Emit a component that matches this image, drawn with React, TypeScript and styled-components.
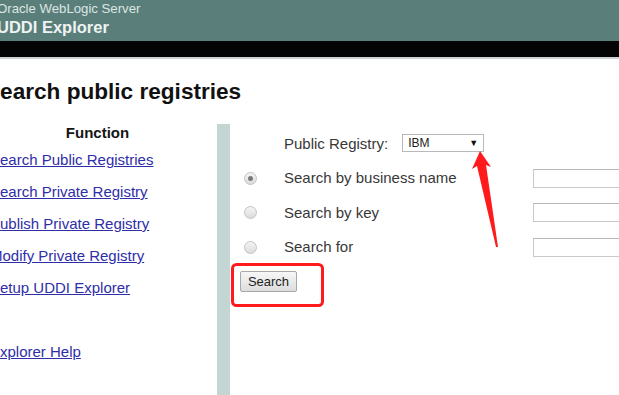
import styled, { createGlobalStyle } from 'styled-components';

const GlobalStyle = createGlobalStyle`
  html, body {
    margin: 0;
    padding: 0;
    background: #ffffff;
    overflow: hidden;
  }
  body {
    font-family: "Liberation Sans", Arial, sans-serif;
  }
`;

const Page = styled.div`
  position: relative;
  width: 619px;
  height: 395px;
  overflow: hidden;
`;

const Header = styled.header`
  background-color: #5a7f7a;
  height: 41px;
  padding: 1px 0 0 0;
  box-sizing: border-box;
`;

const HeaderLine = styled.div<{ strong?: boolean }>`
  margin-left: -3px;
  color: ${({ strong }) => (strong ? '#eef3f2' : '#dce5e3')};
  font-size: ${({ strong }) => (strong ? '16.5px' : '13.2px')};
  line-height: ${({ strong }) => (strong ? '20px' : '16px')};
  font-weight: ${({ strong }) => (strong ? 700 : 400)};
  white-space: nowrap;
`;

const BlackBand = styled.div`
  height: 16px;
  background-color: #050405;
  border-bottom: 2px solid #cfd3d3;
`;

const Title = styled.h1`
  margin: 21px 0 0 -15px;
  font-size: 22.6px;
  line-height: 24px;
  font-weight: 700;
  color: #111111;
  white-space: nowrap;
`;

const Content = styled.div`
  display: flex;
  margin-top: 20px;
  min-height: 300px;
`;

const Sidebar = styled.nav`
  width: 215px;
  margin-left: -10px;
  flex-shrink: 0;
`;

const SidebarTitle = styled.div`
  text-align: center;
  font-size: 15px;
  font-weight: 700;
  line-height: 18px;
  height: 18px;
  margin-bottom: 2px;
  color: #151515;
`;

const NavItem = styled.a`
  display: block;
  height: 32px;
  line-height: 32px;
  font-size: 15px;
  color: #2e2ea8;
  text-decoration: underline;
  white-space: nowrap;
`;

const NavGap = styled.div`
  height: 32px;
`;

const Divider = styled.div`
  width: 13px;
  margin: 0 0 0 12px;
  background-color: #c4d6d3;
  flex-shrink: 0;
`;

const Main = styled.section`
  padding-top: 2px;
  flex: 1;
`;

const FormGrid = styled.div`
  display: grid;
  grid-template-columns: 54px 249px 150px;
  grid-auto-rows: 34.5px;
  align-items: center;
`;

const RadioCell = styled.div`
  padding-left: 14px;
  display: flex;
  align-items: center;
`;

const Radio = styled.span<{ checked?: boolean }>`
  width: 13px;
  height: 13px;
  box-sizing: border-box;
  border-radius: 50%;
  border: 1px solid #c2c2c2;
  background: linear-gradient(#f4f4f4, #dcdcdc);
  display: flex;
  align-items: center;
  justify-content: center;
  margin-top: 1px;

  &::after {
    content: '';
    width: 5px;
    height: 5px;
    border-radius: 50%;
    background: ${({ checked }) => (checked ? '#7a7a7a' : 'transparent')};
  }
`;

const Label = styled.span`
  font-size: 15px;
  color: #383838;
  white-space: nowrap;
`;

const RegistryCell = styled.div`
  grid-column: 2 / 4;
  display: flex;
  align-items: center;
  gap: 14px;
`;

const Select = styled.div`
  width: 82px;
  height: 18px;
  box-sizing: border-box;
  border: 1px solid #b9b9b9;
  display: flex;
  align-items: center;
  justify-content: space-between;
  padding: 0 5px 0 5px;
  font-size: 12px;
  color: #222222;
  background: #ffffff;
`;

const Caret = styled.span`
  font-size: 9px;
  color: #111111;
`;

const TextInput = styled.div`
  width: 150px;
  height: 19px;
  box-sizing: border-box;
  border: 1px solid #c9c9c9;
  border-top-color: #b8b8b8;
  background: #ffffff;
  margin-top: 1px;
`;

const Button = styled.button`
  margin: 7px 0 0 10px;
  width: 57px;
  height: 21px;
  padding: 0;
  border: 1px solid #a8a8a8;
  border-radius: 2px;
  background: linear-gradient(#f7f7f7, #dddddd);
  font-family: "Liberation Sans", Arial, sans-serif;
  font-size: 13px;
  color: #222222;
`;

const Overlay = styled.svg`
  position: absolute;
  left: 0;
  top: 0;
  pointer-events: none;
`;

const links = [
  'Search Public Registries',
  'Search Private Registry',
  'Publish Private Registry',
  'Modify Private Registry',
  'Setup UDDI Explorer',
];

const options = [
  { label: 'Search by business name', checked: true },
  { label: 'Search by key', checked: false },
  { label: 'Search for', checked: false },
];

export default function App() {
  return (
    <>
      <GlobalStyle />
      <Page>
        <Header>
          <HeaderLine>Oracle WebLogic Server</HeaderLine>
          <HeaderLine strong>UDDI Explorer</HeaderLine>
        </Header>
        <BlackBand />
        <Title>Search public registries</Title>
        <Content>
          <Sidebar>
            <SidebarTitle>Function</SidebarTitle>
            {links.map((l) => (
              <NavItem key={l} href="#">{l}</NavItem>
            ))}
            <NavGap />
            <NavItem href="#">Explorer Help</NavItem>
          </Sidebar>
          <Divider />
          <Main>
            <FormGrid>
              <div />
              <RegistryCell>
                <Label>Public Registry:</Label>
                <Select>
                  IBM
                  <Caret>▼</Caret>
                </Select>
              </RegistryCell>
              {options.map((o) => (
                <>
                  <RadioCell key={o.label + 'r'}>
                    <Radio checked={o.checked} />
                  </RadioCell>
                  <Label key={o.label + 'l'}>{o.label}</Label>
                  <TextInput key={o.label + 'i'} />
                </>
              ))}
            </FormGrid>
            <Button>Search</Button>
          </Main>
        </Content>
        <Overlay width="619" height="395" viewBox="0 0 619 395">
          <rect x="232.5" y="264.5" width="90" height="41" rx="4" fill="none" stroke="#ff1b1b" strokeWidth="3" />
          <polygon
            points="480,151 491,167 486,165 498,247 496,247 477,166 472,169"
            fill="#ff1b1b"
          />
        </Overlay>
      </Page>
    </>
  );
}
